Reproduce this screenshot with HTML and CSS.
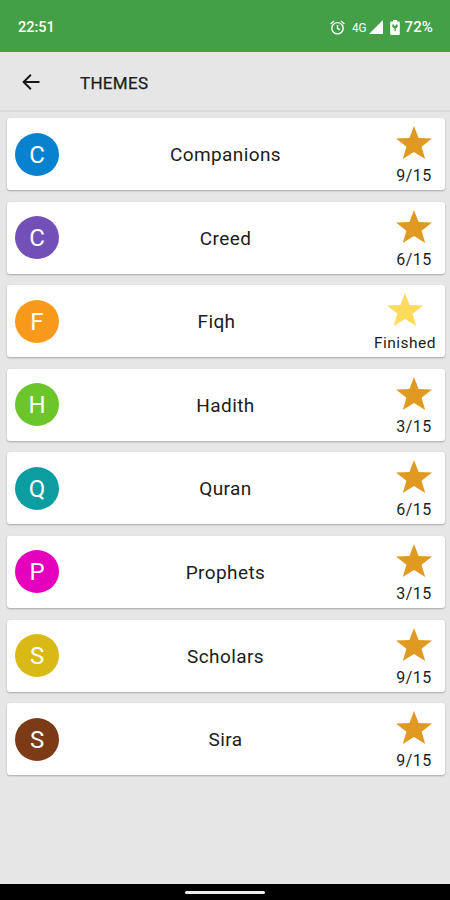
FILE: index.html
```html
<!DOCTYPE html>
<html lang="en">
<head>
<meta charset="utf-8">
<title>Themes</title>
<link rel="stylesheet" href="styles.css">
</head>
<body>
<svg class="defs" aria-hidden="true">
  <symbol id="star" viewBox="0 0 36 33"><path d="M18 0l4.6 12.1L36 12.6 25.6 20.8 29.2 33 18 25.9 6.8 33 10.4 20.8 0 12.6 13.4 12.1z"/></symbol>
</svg>
<header class="status">
  <span class="time">22:51</span>
  <div class="indicators">
    <svg class="alarm" viewBox="0 0 16 16"><g fill="none" stroke="#fff" stroke-width="1.5"><circle cx="8" cy="8.8" r="6"/><path d="M.7 4.200 4.300 1.100M15.300 4.200 11.700 1.100M8 5.300v3.700l2.500 1.500"/></g></svg>
    <span class="network">4G</span>
    <svg class="signal" viewBox="0 0 15 15"><path fill="#fff" d="M15 0v15H0z"/></svg>
    <svg class="battery" viewBox="0 0 10 15"><path fill="#fff" d="M3 0h4v1.500h1.800q1 0 1 1V14q0 1-1 1H1.200q-1 0-1-1V2.500q0-1 1-1H3z"/><path fill="#43a047" d="M2.300 4.500h2v1.500h1.400V4.500h2V7L5.800 8.500V11H4.500V8.500L2.300 7z"/></svg>
    <span class="percent">72%</span>
  </div>
</header>
<nav class="toolbar">
  <svg class="back" viewBox="0 0 18 16"><path fill="none" stroke="#171717" stroke-width="1.9" d="M17.500 8H1.600M8.900.8 1.600 8l7.300 7.200"/></svg>
  <h1 class="title">THEMES</h1>
</nav>
<main class="list">
  <article class="card"><span class="avatar blue">C</span><span class="name">Companions</span><div class="score"><svg class="star"><use href="#star"/></svg><span class="count">9/15</span></div></article>
  <article class="card"><span class="avatar purple">C</span><span class="name">Creed</span><div class="score"><svg class="star"><use href="#star"/></svg><span class="count">6/15</span></div></article>
  <article class="card finished"><span class="avatar orange">F</span><span class="name">Fiqh</span><div class="score"><svg class="star"><use href="#star"/></svg><span class="count">Finished</span></div></article>
  <article class="card"><span class="avatar green">H</span><span class="name">Hadith</span><div class="score"><svg class="star"><use href="#star"/></svg><span class="count">3/15</span></div></article>
  <article class="card"><span class="avatar teal">Q</span><span class="name">Quran</span><div class="score"><svg class="star"><use href="#star"/></svg><span class="count">6/15</span></div></article>
  <article class="card"><span class="avatar pink">P</span><span class="name">Prophets</span><div class="score"><svg class="star"><use href="#star"/></svg><span class="count">3/15</span></div></article>
  <article class="card"><span class="avatar yellow">S</span><span class="name">Scholars</span><div class="score"><svg class="star"><use href="#star"/></svg><span class="count">9/15</span></div></article>
  <article class="card"><span class="avatar brown">S</span><span class="name">Sira</span><div class="score"><svg class="star"><use href="#star"/></svg><span class="count">9/15</span></div></article>
</main>
<footer class="navbar"><span class="handle"></span></footer>
</body>
</html>
```
FILE: styles.css
```css
* { box-sizing: border-box; }
body {
  margin: 0;
  width: 450px;
  height: 900px;
  display: flex;
  flex-direction: column;
  overflow: hidden;
  background: #e6e6e6;
  color: #1c1c1c;
  font-family: Roboto, "Liberation Sans", sans-serif;
}
.defs { display: none; }
svg { display: block; flex: none; }
.status {
  flex: none;
  height: 52px;
  padding: 2px 17px 0 18px;
  display: flex;
  align-items: center;
  justify-content: space-between;
  background: #43a047;
  color: #fff;
  font-size: 14.5px;
  font-weight: 500;
}
.indicators { display: flex; align-items: center; }
.alarm { width: 15px; height: 15px; }
.network { margin-left: 7px; font-size: 13px; font-weight: 400; transform: scaleX(.9); transform-origin: left; width: 16px; }
.signal { width: 14px; height: 14px; margin-left: 1px; }
.battery { width: 10px; height: 15px; margin-left: 7px; }
.percent { margin-left: 4px; font-size: 15px; letter-spacing: .15px; }
.toolbar {
  flex: none;
  height: 60px;
  padding-left: 22px;
  display: flex;
  align-items: center;
  border-bottom: 2px solid #dadada;
}
.back { width: 18px; height: 16px; margin-top: 2px; }
.title { margin: 3px 0 0 40px; font-size: 17px; font-weight: 400; letter-spacing: .3px; -webkit-text-stroke: .25px #1c1c1c; }
.list {
  flex: 1;
  padding: 6px 5px 0 6.5px;
  display: flex;
  flex-direction: column;
  gap: 11.6px;
}
.card {
  flex: none;
  height: 72px;
  padding: 0 9px 0 8.5px;
  display: grid;
  grid-template-columns: 44px 1fr 44px;
  align-items: center;
  background: #fff;
  border-radius: 3px;
  box-shadow: 0 1px 2px rgba(0, 0, 0, .28);
}
.finished { grid-template-columns: 44px 1fr 62px; }
.avatar {
  width: 44px;
  height: 43px;
  border-radius: 50%;
  display: flex;
  align-items: center;
  justify-content: center;
  padding-top: 1px;
  color: #fff;
  font-size: 24px;
}
.blue { background: #0881cf; }
.purple { background: #7250b8; }
.orange { background: #f79a1c; }
.green { background: #6bc52b; }
.teal { background: #0b9da0; }
.pink { background: #e400bd; }
.yellow { background: #d9b915; }
.brown { background: #7d3a16; }
.name { padding-top: 1px; text-align: center; font-size: 19px; letter-spacing: .4px; }
.score { display: flex; flex-direction: column; align-items: center; padding-top: 4px; }
.star { width: 36px; height: 33px; fill: #e09a22; }
.finished .star { fill: #fedb5d; }
.count { margin-top: 7px; font-size: 16px; line-height: 20px; letter-spacing: .5px; white-space: nowrap; }
.finished .count { font-size: 15.5px; }
.navbar {
  flex: none;
  height: 16px;
  display: flex;
  align-items: center;
  justify-content: center;
  padding-top: 1px;
  background: #000;
}
.handle { width: 80px; height: 3px; border-radius: 2px; background: #eee; }
```
